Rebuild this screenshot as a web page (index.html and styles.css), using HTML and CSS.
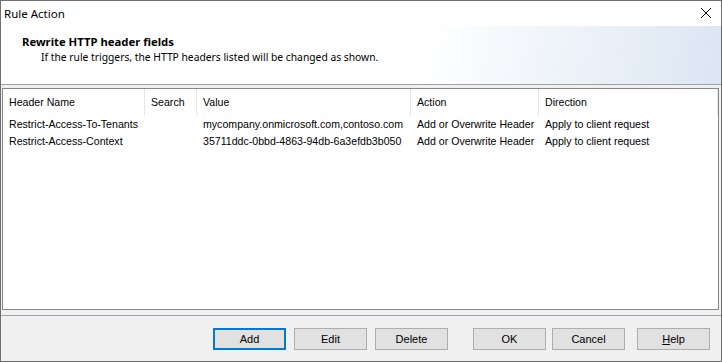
FILE: index.html
```html
<!DOCTYPE html>
<html lang="en">
<head>
    <meta charset="UTF-8">
    <title>Rule Action</title>
    <link rel="stylesheet" href="styles.css">
</head>
<body>
    <div class="window">
        <div class="title-bar">
            <span class="title">Rule Action</span>
            <svg class="close" width="12" height="12" viewBox="0 0 12 12">
                <path d="M1 1 L11 11 M11 1 L1 11" stroke="#000" stroke-width="1" fill="none"/>
            </svg>
        </div>

        <div class="banner">
            <div class="banner-title">Rewrite HTTP header fields</div>
            <div class="banner-text">If the rule triggers, the HTTP headers listed will be changed as shown.</div>
        </div>

        <div class="list">
            <div class="list-row list-head">
                <div class="cell">Header Name</div>
                <div class="cell">Search</div>
                <div class="cell">Value</div>
                <div class="cell">Action</div>
                <div class="cell">Direction</div>
            </div>
            <div class="list-row">
                <div class="cell">Restrict-Access-To-Tenants</div>
                <div class="cell"></div>
                <div class="cell">mycompany.onmicrosoft.com,contoso.com</div>
                <div class="cell">Add or Overwrite Header</div>
                <div class="cell">Apply to client request</div>
            </div>
            <div class="list-row">
                <div class="cell">Restrict-Access-Context</div>
                <div class="cell"></div>
                <div class="cell">35711ddc-0bbd-4863-94db-6a3efdb3b050</div>
                <div class="cell">Add or Overwrite Header</div>
                <div class="cell">Apply to client request</div>
            </div>
        </div>

        <div class="button-bar">
            <button class="btn btn-default">Add</button>
            <button class="btn">Edit</button>
            <button class="btn">Delete</button>
            <button class="btn btn-ok">OK</button>
            <button class="btn">Cancel</button>
            <button class="btn btn-help"><u>H</u>elp</button>
        </div>
    </div>
</body>
</html>
```

FILE: styles.css
```css
* {
    margin: 0;
    padding: 0;
    box-sizing: border-box;
}
body {
    width: 722px;
    height: 362px;
    overflow: hidden;
    background: #f0f0f0;
    font-family: 'Liberation Sans', Arial, sans-serif;
    color: #000;
}
.window {
    width: 722px;
    height: 362px;
    border: 1px solid #6f6f6f;
    background: #f0f0f0;
    display: flex;
    flex-direction: column;
}
.title-bar {
    height: 25px;
    background: #fff;
    display: flex;
    align-items: center;
    justify-content: space-between;
    padding: 0 9px 0 3px;
}
.title {
    font-family: 'Noto Sans', sans-serif;
    font-size: 11.5px;
    padding-bottom: 1px;
}
.close {
    display: block;
    margin-top: -1px;
}
.banner {
    height: 59px;
    background: linear-gradient(100deg, #fff 58%, #dbe6f3 100%);
    border-bottom: 1px solid #a0a0a0;
    padding: 8px 0 0 21px;
    font-family: 'Noto Sans', sans-serif;
}
.banner-title {
    font-weight: bold;
    font-size: 11.3px;
    line-height: 16px;
}
.banner-text {
    padding-left: 19px;
    font-size: 10.3px;
    line-height: 15px;
}
.list {
    height: 222px;
    margin: 3px 2px 0 1px;
    background: #fff;
    border: 1px solid #828790;
    font-size: 10.6px;
}
.list-row {
    display: grid;
    grid-template-columns: 142px 52px 214px 128px 1fr;
    height: 17px;
    align-items: center;
}
.list-head {
    height: 26px;
    align-items: stretch;
}
.list-head .cell {
    display: flex;
    align-items: center;
    border-right: 1px solid #e5e5e5;
}
.cell {
    padding-left: 6px;
    white-space: nowrap;
    overflow: hidden;
}
.button-bar {
    flex: 1;
    margin-top: 5px;
    border-top: 1px solid #a0a0a0;
    display: flex;
    justify-content: flex-end;
    padding: 12px 11px 0 0;
}
.btn {
    width: 73px;
    height: 22px;
    margin-left: 8px;
    background: #e1e1e1;
    border: 1px solid #adadad;
    font-family: 'Liberation Sans', Arial, sans-serif;
    font-size: 11px;
    color: #000;
}
.btn-default {
    border: 2px solid #0078d7;
}
.btn-ok {
    margin-left: 25px;
}
.btn + .btn-ok + .btn {
    margin-left: 6px;
}
.btn-help {
    margin-left: 12px;
}
```
